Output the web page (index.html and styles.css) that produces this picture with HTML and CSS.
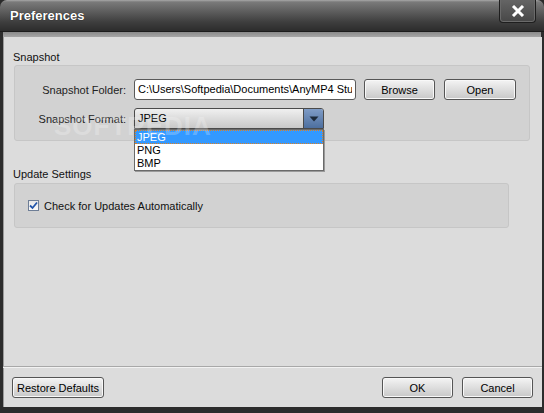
FILE: index.html
```html
<!DOCTYPE html>
<html>
<head>
<meta charset="utf-8">
<link rel="stylesheet" href="styles.css">
</head>
<body>
<div class="window">
  <div class="titlebar">
    <span class="title">Preferences</span>
    <div class="close"><svg width="14" height="12" viewBox="0 0 14 12"><path d="M2 1 L12 11 M12 1 L2 11" stroke="#fff" stroke-width="3"/></svg></div>
  </div>
  <div class="band"></div>
  <div class="body">
    <div class="main">
      <div class="section-label">Snapshot</div>
      <div class="group g1">
        <div class="row">
          <label class="lbl">Snapshot Folder:</label>
          <div class="input"><span class="input-text">C:\Users\Softpedia\Documents\AnyMP4 Studio</span></div>
          <button class="btn browse">Browse</button>
          <button class="btn open">Open</button>
        </div>
        <div class="row">
          <label class="lbl">Snapshot Format:</label>
          <div class="combo-wrap">
            <div class="combo">
              <span class="combo-text">JPEG</span>
              <span class="combo-arrow"><svg width="10" height="6" viewBox="0 0 10 6"><path d="M0.5 0.5 L9.5 0.5 L5 5.5 Z" fill="#1d2a3a"/></svg></span>
            </div>
            <ul class="list">
              <li class="sel">JPEG</li>
              <li>PNG</li>
              <li>BMP</li>
            </ul>
          </div>
        </div>
        <div class="watermark">SOFTPEDIA</div>
      </div>
      <div class="section-label s2">Update Settings</div>
      <div class="group g2">
        <label class="check"><span class="box"><svg width="9" height="9" viewBox="0 0 9 9"><path d="M1 4.5 L3.5 7 L8 1.5" stroke="#2255aa" stroke-width="1.8" fill="none"/></svg></span>Check for Updates Automatically</label>
      </div>
    </div>
    <div class="footer">
      <button class="btn restore">Restore Defaults</button>
      <div class="spacer"></div>
      <button class="btn ok">OK</button>
      <button class="btn cancel">Cancel</button>
    </div>
  </div>
</div>
</body>
</html>
```
FILE: styles.css
```css
html, body {
  margin: 0;
  padding: 0;
  background: #2a2a2a;
}
.window {
  width: 544px;
  height: 413px;
  display: flex;
  flex-direction: column;
  font-family: "Liberation Sans", Arial, sans-serif;
  font-size: 11px;
  color: #000;
  background: #2a2a2a;
}
.titlebar {
  height: 31px;
  border-radius: 7px 7px 0 0;
  background: linear-gradient(#a8a8a8 0px, #7a7a7a 2px, #5c5c5c 12px, #3e3e3e 22px, #2c2c2c 31px);
  border-bottom: 1px solid #1c1c1c;
  position: relative;
  display: flex;
  align-items: center;
  padding-left: 10px;
}
.title {
  color: #fff;
  font-weight: bold;
  font-size: 13px;
  text-shadow: 0 0 1px #000;
  margin-top: -1px;
}
.close {
  position: absolute;
  left: 499px;
  top: -1px;
  width: 35px;
  height: 23px;
  border: 1px solid #1e1e1e;
  border-top: none;
  border-radius: 0 0 4px 4px;
  box-shadow: inset 0 0 0 1px #6a6a6a;
  background: linear-gradient(#666 0, #474747 100%);
  display: flex;
  align-items: center;
  justify-content: center;
}
.band {
  height: 5px;
  background: linear-gradient(#8a8a8a, #a6a6a6);
  border-left: 3px solid #2c2c2c;
  border-right: 3px solid #2c2c2c;
}
.body {
  flex: 1;
  display: flex;
  flex-direction: column;
  background: #dcdcdc;
  border-left: 3px solid #2c2c2c;
  border-right: 2px solid #2c2c2c;
  border-bottom: 6px solid #2c2c2c;
  box-shadow: inset 1px 0 0 #9a9a9a;
}
.main {
  flex: 1;
  border-bottom: 1px solid #a8a8a8;
  box-shadow: 0 1px 0 #f2f2f2;
  padding-top: 13px;
}
.section-label {
  padding-left: 10px;
  height: 15px;
  line-height: 15px;
  color: #111;
}
.section-label.s2 {
  margin-top: 26px;
}
.group {
  background: #d2d2d2;
  border: 1px solid #c6c6c6;
  border-radius: 3px;
  position: relative;
}
.g1 {
  margin: 0 12px 0 11px;
  height: 76px;
  box-sizing: border-box;
  padding-top: 13px;
  display: flex;
  flex-direction: column;
  gap: 8px;
}
.g2 {
  margin: 1px 0 0 11px;
  width: 495px;
  height: 45px;
  box-sizing: border-box;
  display: flex;
  align-items: center;
  padding-left: 13px;
}
.row {
  display: flex;
  align-items: center;
  height: 21px;
}
.lbl {
  width: 111px;
  text-align: right;
  color: #222;
  margin-right: 8px;
}
.input {
  width: 222px;
  height: 21px;
  box-sizing: border-box;
  background: #fff;
  border: 1px solid #5a5a5a;
  border-radius: 3px;
  padding: 0 3px;
  line-height: 19px;
  overflow: hidden;
  color: #000;
}
.input-text {
  display: block;
  white-space: nowrap;
  overflow: hidden;
  text-overflow: clip;
  width: 214px;
}
.btn {
  height: 21px;
  box-sizing: border-box;
  border: 1px solid #555;
  border-radius: 3px;
  background: linear-gradient(#f4f4f4 0%, #e0e0e0 45%, #c8c8c8 100%);
  box-shadow: inset 0 0 0 1px #f8f8f8;
  font-family: "Liberation Sans", Arial, sans-serif;
  font-size: 11px;
  color: #000;
  padding: 0;
}
.browse { width: 71px; margin-left: 8px; }
.open { width: 72px; margin-left: 9px; }
.combo-wrap {
  position: relative;
  width: 190px;
}
.combo {
  height: 21px;
  box-sizing: border-box;
  border: 1px solid #4a4a4a;
  border-radius: 3px 3px 0 0;
  display: flex;
  background: linear-gradient(#f0f0f0, #c8c8c8);
  overflow: hidden;
}
.combo-text {
  flex: 1;
  padding-left: 3px;
  line-height: 19px;
}
.combo-arrow {
  width: 19px;
  border-left: 1px solid #4a4a4a;
  background: linear-gradient(#7f9cc6, #4d6f9f);
  display: flex;
  align-items: center;
  justify-content: center;
}
.list {
  position: absolute;
  top: 21px;
  left: 0;
  width: 190px;
  box-sizing: border-box;
  margin: 0;
  padding: 0;
  list-style: none;
  background: #fff;
  border: 1px solid #6a6a6a;
  box-shadow: 1px 1px 0 #9a9a9a;
  z-index: 2;
}
.list li {
  height: 13px;
  line-height: 13px;
  padding-left: 2px;
}
.list li.sel {
  background: #3399ff;
  color: #fff;
  outline: 1px dotted #e08020;
  outline-offset: -1px;
  height: 14px;
  line-height: 14px;
}
.watermark {
  position: absolute;
  left: 39px;
  top: 45px;
  font-size: 26px;
  font-weight: bold;
  letter-spacing: 1px;
  color: #fff;
  opacity: 0.22;
  z-index: 3;
  pointer-events: none;
}
.check {
  display: flex;
  align-items: center;
  gap: 5px;
  color: #111;
}
.box {
  width: 11px;
  height: 11px;
  box-sizing: border-box;
  border: 1px solid #6e7e96;
  background: linear-gradient(#e8e8e8, #fafafa);
  display: flex;
  align-items: center;
  justify-content: center;
}
.footer {
  height: 39px;
  display: flex;
  align-items: center;
  padding: 0 9px 0 9px;
  padding-top: 1px;
}
.restore { width: 92px; }
.spacer { flex: 1; }
.ok { width: 71px; }
.cancel { width: 71px; margin-left: 9px; }
```
